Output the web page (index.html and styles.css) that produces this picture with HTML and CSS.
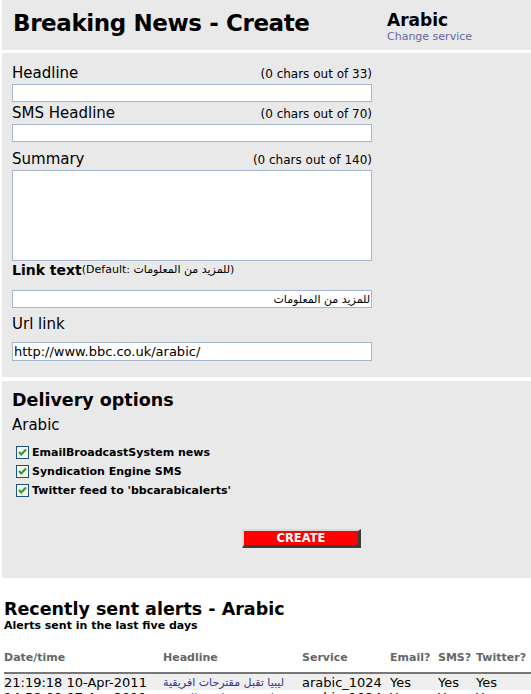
FILE: index.html
```html
<!DOCTYPE html>
<html lang="en">
<head>
    <meta charset="UTF-8">
    <meta name="viewport" content="width=device-width, initial-scale=1.0">
    <title>Breaking News - Create</title>
    <link rel="stylesheet" href="styles.css">
</head>
<body>

<div class="page">
    <div class="head-box">
        <h1 class="title">Breaking News - Create</h1>
        <div class="service">
            <div class="service-name">Arabic</div>
            <a class="change-link" href="#">Change service</a>
        </div>
    </div>

    <form class="form-box" id="alert-form">
        <div class="field-head">
            <label for="headline">Headline</label>
            <span class="counter">(0 chars out of 33)</span>
        </div>
        <input type="text" id="headline" name="headline" class="text-in">

        <div class="field-head gap-small">
            <label for="sms">SMS Headline</label>
            <span class="counter">(0 chars out of 70)</span>
        </div>
        <input type="text" id="sms" name="sms" class="text-in">

        <div class="field-head gap-summary">
            <label for="summary">Summary</label>
            <span class="counter">(0 chars out of 140)</span>
        </div>
        <textarea id="summary" name="summary" class="text-area"></textarea>

        <div class="field-head link-head">
            <label for="link-text" class="bold-label">Link text</label><span class="hint">(Default: للمزيد من المعلومات)</span>
        </div>
        <input type="text" id="link-text" name="link-text" class="text-in arabic-in" dir="rtl" value="للمزيد من المعلومات">

        <div class="field-head gap-url">
            <label for="url">Url link</label>
        </div>
        <input type="text" id="url" name="url" class="text-in url-in" value="http://www.bbc.co.uk/arabic/">
    </form>

    <div class="delivery-box">
        <h2 class="section-title">Delivery options</h2>
        <div class="service-label">Arabic</div>

        <div class="checks">
            <label class="check-row">
                <span class="check"><svg width="13" height="13" viewBox="0 0 13 13"><rect x="0.5" y="0.5" width="12" height="12" fill="#f4f4f0" stroke="#1c5180"/><path d="M3 6 L5.2 8.5 L10 3.5" fill="none" stroke="#21a121" stroke-width="2"/></svg></span>
                EmailBroadcastSystem news
            </label>
            <label class="check-row">
                <span class="check"><svg width="13" height="13" viewBox="0 0 13 13"><rect x="0.5" y="0.5" width="12" height="12" fill="#f4f4f0" stroke="#1c5180"/><path d="M3 6 L5.2 8.5 L10 3.5" fill="none" stroke="#21a121" stroke-width="2"/></svg></span>
                Syndication Engine SMS
            </label>
            <label class="check-row">
                <span class="check"><svg width="13" height="13" viewBox="0 0 13 13"><rect x="0.5" y="0.5" width="12" height="12" fill="#f4f4f0" stroke="#1c5180"/><path d="M3 6 L5.2 8.5 L10 3.5" fill="none" stroke="#21a121" stroke-width="2"/></svg></span>
                Twitter feed to 'bbcarabicalerts'
            </label>
        </div>

        <button type="submit" form="alert-form" class="create-btn">CREATE</button>
    </div>

    <div class="recent">
        <h2 class="section-title">Recently sent alerts - Arabic</h2>
        <div class="subtitle">Alerts sent in the last five days</div>

        <table class="alerts">
            <colgroup>
                <col class="c-date">
                <col class="c-head">
                <col class="c-service">
                <col class="c-email">
                <col class="c-sms">
                <col>
            </colgroup>
            <thead>
                <tr>
                    <th>Date/time</th>
                    <th>Headline</th>
                    <th>Service</th>
                    <th>Email?</th>
                    <th>SMS?</th>
                    <th>Twitter?</th>
                </tr>
            </thead>
            <tbody>
                <tr class="odd">
                    <td>21:19:18 10-Apr-2011</td>
                    <td><a href="#" class="ar-link" dir="rtl">ليبيا تقبل مقترحات افريقية</a></td>
                    <td>arabic_1024</td>
                    <td>Yes</td>
                    <td>Yes</td>
                    <td>Yes</td>
                </tr>
                <tr>
                    <td>14:58:08 07-Apr-2011</td>
                    <td><a href="#" class="ar-link" dir="rtl">غارة جوية على قطاع غزة</a></td>
                    <td>arabic_1024</td>
                    <td>Yes</td>
                    <td>Yes</td>
                    <td>Yes</td>
                </tr>
            </tbody>
        </table>
    </div>
</div>

</body>
</html>
```

FILE: styles.css
```css
body {
    margin: 0;
    font-family: "DejaVu Sans", Verdana, sans-serif;
    color: #000;
    background-color: #ffffff;
}
.page {
    padding-left: 2px;
}
.head-box {
    display: flex;
    height: 50px;
    background-color: #e9e9e9;
}
.title {
    width: 374px;
    margin: 0;
    padding: 9px 0 0 11px;
    font-size: 23px;
    line-height: 28px;
    letter-spacing: -0.4px;
    font-weight: bold;
}
.service {
    padding-top: 10px;
}
.service-name {
    font-size: 17px;
    font-weight: bold;
    line-height: 20px;
}
.change-link {
    display: block;
    font-size: 11px;
    line-height: 13px;
    color: #66669c;
    text-decoration: none;
}
.form-box {
    margin: 3px 0 0;
    padding: 11px 10px 16px 10px;
    background-color: #e9e9e9;
}
.field-head {
    display: flex;
    justify-content: space-between;
    align-items: baseline;
    width: 360px;
    height: 18px;
}
.field-head label {
    font-size: 15px;
    line-height: 18px;
}
.field-head .bold-label {
    font-size: 14px;
    font-weight: bold;
}
.counter {
    font-size: 12px;
    line-height: 14px;
}
.gap-small {
    margin-top: 2px;
}
.gap-summary {
    margin-top: 8px;
}
.link-head {
    justify-content: flex-start;
}
.hint {
    font-size: 11px;
    position: relative;
    top: -2px;
}
.gap-url {
    margin-top: 7px;
}
.text-in,
.text-area {
    display: block;
    width: 360px;
    height: 18px;
    margin: 2px 0 0;
    padding: 0 1px;
    border: 1px solid #a3b7cf;
    box-sizing: border-box;
    background-color: #ffffff;
    font-family: "DejaVu Sans", Verdana, sans-serif;
    font-size: 13px;
}
.text-area {
    height: 91px;
    resize: none;
}
.arabic-in {
    margin-top: 11px;
    font-size: 11px;
}
.url-in {
    height: 19px;
    margin-top: 9px;
}
.delivery-box {
    margin-top: 4px;
    padding: 8px 10px 30px 10px;
    background-color: #e9e9e9;
}
.section-title {
    margin: 0;
    font-size: 17.5px;
    line-height: 22px;
    font-weight: bold;
}
.service-label {
    margin-top: 5px;
    font-size: 15px;
    line-height: 18px;
}
.checks {
    margin-top: 9px;
}
.check-row {
    display: flex;
    align-items: center;
    height: 19px;
    padding-left: 4px;
    font-size: 11px;
    font-weight: bold;
}
.check {
    display: flex;
    margin-right: 3px;
}
.create-btn {
    display: block;
    width: 119px;
    height: 19px;
    margin: 29px 0 0 230px;
    padding: 0;
    background-color: #ff0000;
    color: #ffffff;
    border-top: 2px solid #d9d9d9;
    border-left: 2px solid #d9d9d9;
    border-right: 3px solid #3c3c3c;
    border-bottom: 3px solid #3c3c3c;
    font-family: "DejaVu Sans", Verdana, sans-serif;
    font-size: 11.5px;
    font-weight: bold;
    line-height: 13px;
    cursor: pointer;
}
.recent {
    padding-left: 2px;
}
.recent .section-title {
    margin-top: 22px;
    line-height: 19px;
}
.subtitle {
    font-size: 11px;
    font-weight: bold;
    line-height: 13px;
}
.alerts {
    width: 527px;
    margin-top: 19px;
    border-collapse: collapse;
    table-layout: fixed;
}
.c-date { width: 159px; }
.c-head { width: 139px; }
.c-service { width: 88px; }
.c-email { width: 48px; }
.c-sms { width: 38px; }
.alerts th {
    padding: 0 0 8px 0;
    text-align: left;
    font-size: 11px;
    line-height: 13px;
    color: #666666;
    border-bottom: 2px solid #777777;
    white-space: nowrap;
}
.alerts td {
    padding: 0;
    font-size: 13px;
    line-height: 14px;
    white-space: nowrap;
    overflow: hidden;
}
.alerts tbody tr:first-child td {
    padding-top: 1px;
}
.alerts .odd {
    background-color: #efefef;
}
.ar-link {
    font-size: 11px;
    color: #333399;
    text-decoration: none;
}
```
